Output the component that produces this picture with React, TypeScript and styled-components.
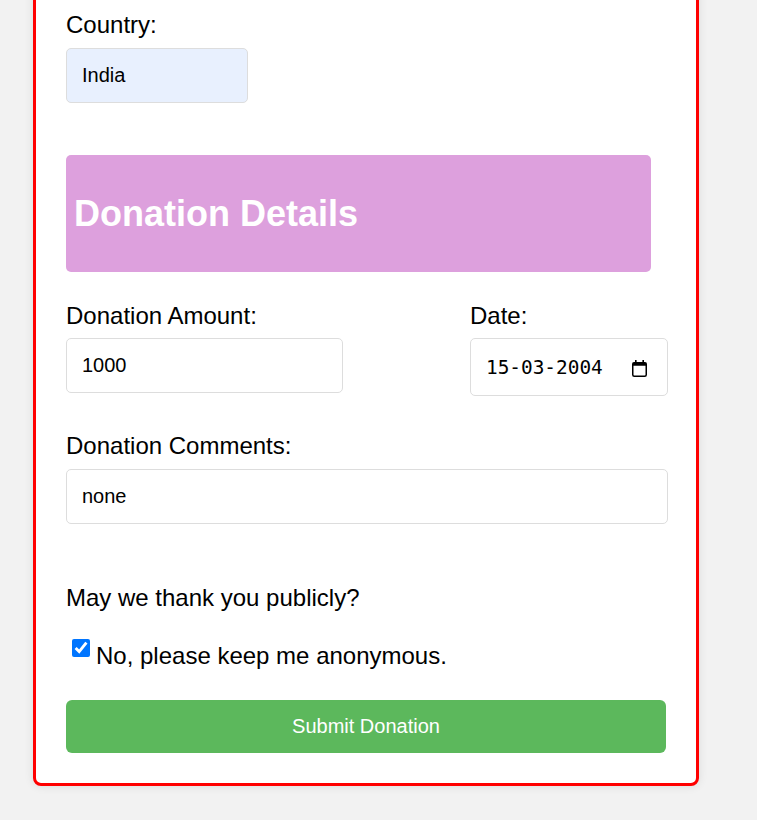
import React from "react";
import styled, { createGlobalStyle } from "styled-components";

const Global = createGlobalStyle`
  html, body {
    margin: 0;
    padding: 0;
    background: #f2f2f2;
    font-family: "Liberation Sans", Arial, sans-serif;
    color: #000;
  }
  * { box-sizing: border-box; }
`;

const Page = styled.div`
  padding: 0 0 35px 33px;
  min-height: 820px;
  overflow: hidden;
`;

const Card = styled.form`
  width: 666px;
  margin-top: -22px;
  background: #fff;
  border: 3px solid #ff0000;
  border-radius: 8px;
  box-shadow: 0 0 10px rgba(0, 0, 0, 0.1);
  padding: 30px 28px 30px 30px;
  display: flex;
  flex-direction: column;
`;

const Group = styled.div<{ $mb?: number; $w?: number }>`
  display: flex;
  flex-direction: column;
  margin-bottom: ${(p) => p.$mb ?? 0}px;
  width: ${(p) => (p.$w ? `${p.$w}px` : "auto")};
`;

const Label = styled.label`
  display: block;
  font-size: 24px;
  margin-bottom: 8.5px;
`;

const TextInput = styled.input<{ $w?: number; $autofill?: boolean }>`
  width: ${(p) => (p.$w ? `${p.$w}px` : "100%")};
  font-family: "Liberation Sans", Arial, sans-serif;
  font-size: 20px;
  line-height: 23px;
  padding: 15px;
  border: 1px solid #ddd;
  border-radius: 5px;
  background: ${(p) => (p.$autofill ? "#e8f0fe" : "#fff")};
  color: #000;
  outline: none;
`;

const DateBox = styled.div`
  display: flex;
  align-items: center;
  width: 100%;
  height: 58px;
  padding: 0 20px 0 15px;
  border: 1px solid #ddd;
  border-radius: 5px;
  background: #fff;
`;

const DateText = styled.input`
  flex: 1;
  min-width: 0;
  border: none;
  padding: 2px 0 0;
  margin: 0;
  outline: none;
  background: transparent;
  font-family: "DejaVu Sans Mono", monospace;
  font-size: 19.4px;
  line-height: 24px;
  color: #000;
`;

const CalendarIcon = styled.svg`
  width: 15px;
  height: 17px;
  flex: none;
  margin-top: 2px;
`;

const SectionHeader = styled.div`
  width: 585px;
  background: #dda0dd;
  border-radius: 5px;
  padding: 38px 8px;
  margin-bottom: 30px;
`;

const SectionTitle = styled.h2`
  margin: 0;
  color: #fff;
  font-size: 36px;
  font-weight: bold;
  line-height: 41px;
`;

const Row = styled.div`
  display: flex;
  justify-content: space-between;
  align-items: flex-start;
  margin-bottom: 36px;
`;

const Question = styled.p`
  margin: 0 0 30px;
  font-size: 24px;
`;

const CheckRow = styled.label`
  display: flex;
  align-items: flex-start;
  font-size: 24px;
  margin-bottom: 30px;
`;

const Check = styled.input`
  width: 18px;
  height: 18px;
  margin: -3px 6px 0 6px;
  flex: none;
`;

const SubmitButton = styled.button`
  width: 600px;
  background: #5cb85c;
  color: #fff;
  border: none;
  border-radius: 6px;
  font-family: "Liberation Sans", Arial, sans-serif;
  font-size: 20px;
  line-height: 23px;
  padding: 15px;
  cursor: pointer;
`;

export default function App() {
  return (
    <>
      <Global />
      <Page>
        <Card onSubmit={(e) => e.preventDefault()}>
          <Group $mb={52}>
            <Label htmlFor="country">Country:</Label>
            <TextInput id="country" $w={182} $autofill defaultValue="India" />
          </Group>

          <SectionHeader>
            <SectionTitle>Donation Details</SectionTitle>
          </SectionHeader>

          <Row>
            <Group $w={277}>
              <Label htmlFor="amount">Donation Amount:</Label>
              <TextInput id="amount" defaultValue="1000" />
            </Group>
            <Group $w={198}>
              <Label htmlFor="date">Date:</Label>
              <DateBox>
                <DateText id="date" defaultValue="15-03-2004" />
                <CalendarIcon viewBox="0 0 15 17" aria-hidden="true">
                  <rect x="3" y="0" width="1.6" height="3.5" fill="#000" />
                  <rect x="10.4" y="0" width="1.6" height="3.5" fill="#000" />
                  <rect
                    x="0.75"
                    y="2.75"
                    width="13.5"
                    height="13.5"
                    rx="1.5"
                    fill="none"
                    stroke="#000"
                    strokeWidth="1.5"
                  />
                  <rect x="0.75" y="2.75" width="13.5" height="3" fill="#000" />
                </CalendarIcon>
              </DateBox>
            </Group>
          </Row>

          <Group $mb={60}>
            <Label htmlFor="comments">Donation Comments:</Label>
            <TextInput id="comments" defaultValue="none" />
          </Group>

          <Question>May we thank you publicly?</Question>

          <CheckRow>
            <Check type="checkbox" defaultChecked />
            No, please keep me anonymous.
          </CheckRow>

          <SubmitButton type="submit">Submit Donation</SubmitButton>
        </Card>
      </Page>
    </>
  );
}
